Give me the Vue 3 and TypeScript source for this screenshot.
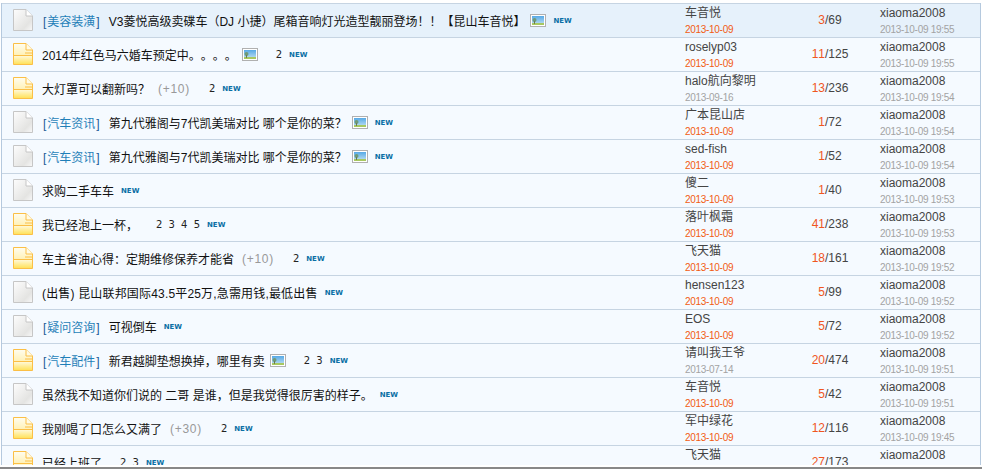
<script setup lang="ts">
interface Row {
  hover?: boolean
  wide?: boolean
  kind: 'plain' | 'hot'
  tag?: string
  title: string
  extra?: string
  pic?: boolean
  pages?: string
  isNew: boolean
  author: string
  date: string
  fresh: boolean
  a: string
  b: string
  last: string
}
const rows: Row[] = [
  { hover: true, kind: 'plain', tag: '美容装潢', title: 'V3菱悦高级卖碟车（DJ 小捷）尾箱音响灯光造型靓丽登场！！【昆山车音悦】', pic: true, isNew: true, author: '车音悦', date: '2013-10-09', fresh: true, a: '3', b: '69', last: '2013-10-09 19:55' },
  { kind: 'hot', title: '2014年红色马六婚车预定中。。。。', pic: true, pages: '2', isNew: true, author: 'roselyp03', date: '2013-10-09', fresh: true, a: '11', b: '125', last: '2013-10-09 19:55' },
  { kind: 'hot', title: '大灯罩可以翻新吗？', extra: '(+10)', pages: '2', isNew: true, author: 'halo航向黎明', date: '2013-09-16', fresh: false, a: '13', b: '236', last: '2013-10-09 19:54' },
  { kind: 'plain', tag: '汽车资讯', title: '第九代雅阁与7代凯美瑞对比 哪个是你的菜？', pic: true, isNew: true, author: '广本昆山店', date: '2013-10-09', fresh: true, a: '1', b: '72', last: '2013-10-09 19:54' },
  { kind: 'plain', tag: '汽车资讯', title: '第九代雅阁与7代凯美瑞对比 哪个是你的菜？', pic: true, isNew: true, author: 'sed-fish', date: '2013-10-09', fresh: true, a: '1', b: '52', last: '2013-10-09 19:54' },
  { kind: 'plain', title: '求购二手车车', isNew: true, author: '傻二', date: '2013-10-09', fresh: true, a: '1', b: '40', last: '2013-10-09 19:53' },
  { kind: 'hot', title: '我已经泡上一杯，', pages: '2 3 4 5', isNew: true, author: '落叶枫霜', date: '2013-10-09', fresh: true, a: '41', b: '238', last: '2013-10-09 19:53' },
  { kind: 'hot', title: '车主省油心得：定期维修保养才能省', extra: '(+10)', pages: '2', isNew: true, author: '飞天猫', date: '2013-10-09', fresh: true, a: '18', b: '161', last: '2013-10-09 19:52' },
  { kind: 'plain', wide: true, title: '(出售) 昆山联邦国际43.5平25万,急需用钱,最低出售', isNew: true, author: 'hensen123', date: '2013-10-09', fresh: true, a: '5', b: '99', last: '2013-10-09 19:52' },
  { kind: 'plain', tag: '疑问咨询', title: '可视倒车', isNew: true, author: 'EOS', date: '2013-10-09', fresh: true, a: '5', b: '72', last: '2013-10-09 19:52' },
  { kind: 'hot', tag: '汽车配件', title: '新君越脚垫想换掉，哪里有卖', pic: true, pages: '2 3', isNew: true, author: '请叫我王爷', date: '2013-07-14', fresh: false, a: '20', b: '474', last: '2013-10-09 19:51' },
  { kind: 'plain', title: '虽然我不知道你们说的 二哥 是谁，但是我觉得很厉害的样子。', isNew: true, author: '车音悦', date: '2013-10-09', fresh: true, a: '5', b: '42', last: '2013-10-09 19:51' },
  { kind: 'hot', title: '我刚喝了口怎么又满了', extra: '(+30)', pages: '2', isNew: true, author: '军中绿花', date: '2013-10-09', fresh: true, a: '12', b: '116', last: '2013-10-09 19:45' },
  { kind: 'hot', title: '已经上班了', pages: '2 3', isNew: true, author: '飞天猫', date: '2013-10-09', fresh: true, a: '27', b: '173', last: '2013-10-09 19:45' },
]
</script>

<template>
  <div class="page">
    <div class="board">
      <div v-for="(r, i) in rows" :key="i" class="row" :class="{ hover: r.hover }">
        <div class="ico">
          <svg width="20" height="22" viewBox="0 0 20 22">
            <template v-if="r.kind === 'hot'">
              <defs>
                <linearGradient :id="'h' + i" x1="0" y1="0" x2="0" y2="1">
                  <stop offset="0" stop-color="#fffdf0" />
                  <stop offset="1" stop-color="#ffe88a" />
                </linearGradient>
                <linearGradient :id="'k' + i" x1="0" y1="0" x2="0" y2="1">
                  <stop offset="0" stop-color="#fffbe6" />
                  <stop offset="1" stop-color="#ffe25c" />
                </linearGradient>
              </defs>
              <path d="M.5.5H13L19.5 7V21.5H.5Z" :fill="`url(#h${i})`" stroke="#fbbf46" />
              <path d="M13 .5V7H19.5" fill="#fffbe6" stroke="#fbbf46" />
              <rect x="1" y="12" width="18" height="9" :fill="`url(#k${i})`" />
              <path d="M.5 12.5H19.5" stroke="#fbbf46" />
              <path d="M12 10H19" stroke="#fbbf46" />
            </template>
            <template v-else>
              <defs>
                <linearGradient :id="'p' + i" x1="0" y1="0" x2="1" y2="1">
                  <stop offset="0" stop-color="#fdfdfd" />
                  <stop offset=".72" stop-color="#e4e4e2" />
                  <stop offset="1" stop-color="#f8f8f8" />
                </linearGradient>
              </defs>
              <path d="M.5.5H13L19.5 7V21.5H.5Z" :fill="`url(#p${i})`" stroke="#c6c6c6" />
              <path d="M13 .5V7H19.5" fill="#fff" stroke="#c6c6c6" />
            </template>
          </svg>
        </div>
        <div class="title">
          <span v-if="r.tag" class="tag">[<em>{{ r.tag }}</em>]</span>
          <span class="subject" :class="{ wide: r.wide }">{{ r.title }}</span>
          <span v-if="r.extra" class="extra">{{ r.extra }}</span>
          <svg v-if="r.pic" class="pic" width="16" height="13" viewBox="0 0 16 13">
            <defs>
              <linearGradient :id="'s' + i" x1="0" y1="0" x2="0" y2="1">
                <stop offset="0" stop-color="#56a9e6" />
                <stop offset="1" stop-color="#c4e2f2" />
              </linearGradient>
            </defs>
            <rect x=".5" y=".5" width="15" height="12" fill="#fff" stroke="#b0b0b0" />
            <rect x="2" y="2" width="12" height="9" :fill="`url(#s${i})`" />
            <rect x="2" y="9" width="12" height="2" fill="#a8c860" />
            <circle cx="4.5" cy="6" r="2" fill="#6f9a78" />
            <rect x="4" y="7" width="1" height="3" fill="#6b7a50" />
          </svg>
          <span v-if="r.pages" class="pages">{{ r.pages }}</span>
          <span v-if="r.isNew" class="new">NEW</span>
        </div>
        <div class="meta">
          <div class="top">{{ r.author }}</div>
          <div class="date" :class="{ fresh: r.fresh }">{{ r.date }}</div>
        </div>
        <div class="count"><span>{{ r.a }}</span>/{{ r.b }}</div>
        <div class="meta last">
          <div class="top">xiaoma2008</div>
          <div class="date">{{ r.last }}</div>
        </div>
      </div>
    </div>
    <div class="foot"></div>
  </div>
</template>

<style scoped>
.page {
  height: 469px;
  padding-top: 3px;
  box-sizing: border-box;
  overflow: hidden;
}
.board {
  box-sizing: border-box;
  width: 980px;
  height: 462px;
  margin-left: 1px;
  border-left: 1px solid #b5c9de;
  border-right: 1px solid #b5c9de;
  background: #f5faff;
  overflow: hidden;
  font-family: "Liberation Sans", "Noto Sans CJK SC", sans-serif;
  font-size: 12px;
  color: #222;
  text-spacing-trim: space-all;
  font-kerning: none;
}
.foot {
  height: 2px;
  margin-top: 2px;
  background: #888;
}
.row {
  box-sizing: border-box;
  height: 34px;
  border-top: 1px solid #c6d4e2;
  display: grid;
  grid-template-columns: 683px 100px 90px 1fr;
  position: relative;
}
.row.hover {
  background: #e6f1fb;
}
.ico {
  position: absolute;
  left: 11px;
  top: 5px;
  height: 22px;
}
.title {
  display: flex;
  align-items: center;
  padding-left: 40px;
  white-space: pre;
  height: 33px;
}
.tag {
  color: #1a5c96;
  margin-left: 1px;
  margin-right: 9px;
}
.tag em {
  font-style: normal;
  color: #1f7fb8;
  margin: 0 1px;
}
.subject {
  color: #111;
}
.subject.wide {
  letter-spacing: .17px;
}
.extra {
  color: #999;
  margin-left: 8px;
  margin-right: 1px;
  letter-spacing: .7px;
}
.pic {
  margin-left: 5px;
  flex: none;
}
.pages {
  margin-left: 18px;
  font-size: 10px;
  color: #222;
  word-spacing: 3px;
  font-family: "DejaVu Sans", sans-serif;
}
.new {
  margin-left: 7px;
  font-family: "DejaVu Sans", sans-serif;
  font-size: 7px;
  font-weight: bold;
  color: #0a6fa5;
}
.meta {
  display: flex;
  flex-direction: column;
  height: 33px;
  padding-top: 1px;
  box-sizing: border-box;
}
.last {
  padding-left: 5px;
}
.top {
  font-size: 12px;
  line-height: 17px;
  color: #444;
}
.date {
  font-size: 10px;
  line-height: 15px;
  letter-spacing: -.3px;
  color: #a3a3a3;
}
.date.fresh {
  color: #f25c13;
}
.count {
  text-align: center;
  line-height: 33px;
  font-size: 12px;
  color: #444;
}
.count span {
  color: #f0561e;
}
</style>
<style>
body { background: #fff; }
</style>
